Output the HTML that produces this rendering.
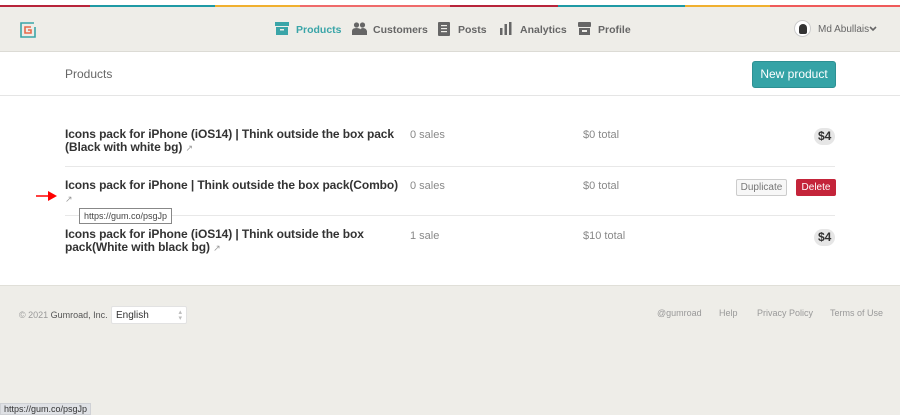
<!DOCTYPE html>
<html><head><style>
*{margin:0;padding:0;box-sizing:border-box}
body{width:900px;height:415px;overflow:hidden;font-family:"Liberation Sans",sans-serif;background:#eeede8;position:relative}
.abs{position:absolute}
.stripe{top:5px;height:2px;left:0;width:900px;background:linear-gradient(90deg,#b8243a 0 90px,#1f9aa5 90px 215px,#f0b030 215px 300px,#ef6a6a 300px 450px,#b8243a 450px 558px,#1f9aa5 558px 685px,#f0b030 685px 770px,#ef5a5a 770px 900px)}
.top{top:0;left:0;width:900px;height:5px;background:#fff}
.hdr{top:7px;left:0;width:900px;height:45px;border-bottom:1px solid #dcdbd5}
.nav{font-size:10.5px;font-weight:bold;color:#666;top:24px}
.main{top:52px;left:0;width:900px;height:233px;background:#fff}
.title{font-size:12px;font-weight:bold;color:#333;line-height:13px;left:65px;width:340px;letter-spacing:-0.1px}
.cell{font-size:11px;color:#888}
.sep{left:65px;width:770px;height:1px;background:#e8e8e8}
.badge{background:#e6e6e6;border-radius:9px;font-size:12px;font-weight:bold;color:#333;padding:2px 4px;line-height:13px}
.ar{color:#999;font-size:9px;font-weight:normal}
</style></head><body>
<div class="abs top"></div>
<div class="abs stripe"></div>
<div class="abs hdr">
 <svg class="abs" style="left:19px;top:14px" width="18" height="18" viewBox="0 0 18 18"><path d="M15 2H2v14h14V6" fill="none" stroke="#3aa5a8" stroke-width="1.6"/><path d="M12 6H6v6h6v-3H9" fill="none" stroke="#e86a4a" stroke-width="1.6"/></svg>
</div>
<svg class="abs" style="left:275px;top:22px" width="14" height="13"><rect x="0" y="0" width="14" height="4" fill="#3aa5a8"/><rect x="1" y="5" width="12" height="8" fill="#3aa5a8"/><rect x="5" y="7" width="4" height="1.5" fill="#eeede8"/></svg>
<div class="abs nav" style="left:296px;color:#3aa5a8">Products</div>
<svg class="abs" style="left:352px;top:22px" width="15" height="13" fill="#666"><circle cx="4.5" cy="3" r="2.6"/><circle cx="10.5" cy="3" r="2.6"/><path d="M0 13v-4q0-3 4.5-3t4.5 3v4zM8 13V9q0-3 3-3t4 3v4z"/></svg>
<div class="abs nav" style="left:373px">Customers</div>
<svg class="abs" style="left:438px;top:22px" width="12" height="14" fill="#666"><rect x="0" y="0" width="12" height="14" rx="1"/><rect x="3" y="3" width="6" height="1.2" fill="#eeede8"/><rect x="3" y="6" width="6" height="1.2" fill="#eeede8"/><rect x="3" y="9" width="6" height="1.2" fill="#eeede8"/></svg>
<div class="abs nav" style="left:458px">Posts</div>
<svg class="abs" style="left:500px;top:22px" width="12" height="13" fill="#666"><rect x="0" y="6" width="2.5" height="7"/><rect x="4.5" y="2" width="2.5" height="11"/><rect x="9" y="0" width="2.5" height="13"/></svg>
<div class="abs nav" style="left:520px">Analytics</div>
<svg class="abs" style="left:578px;top:22px" width="13" height="13" fill="#666"><rect x="0" y="0" width="13" height="5" rx="1"/><rect x="1" y="6" width="11" height="7"/><rect x="4" y="8" width="5" height="2" fill="#eeede8"/></svg>
<div class="abs nav" style="left:598px">Profile</div>
<div class="abs" style="left:794px;top:20px;width:17px;height:17px;border-radius:50%;background:#fff;border:1px solid #ccc"><div style="margin:3px auto;width:8px;height:10px;background:#333;border-radius:4px 4px 2px 2px"></div></div>
<div class="abs nav" style="left:818px;top:24px;font-size:10px;font-weight:normal">Md Abullais</div>
<svg class="abs" style="left:869px;top:26px" width="8" height="6"><path d="M1 1l3 3 3-3" fill="none" stroke="#666" stroke-width="1.6"/></svg>

<div class="abs main"></div>
<div class="abs" style="left:65px;top:67px;font-size:12px;color:#666">Products</div>
<div class="abs" style="left:752px;top:61px;width:84px;height:27px;background:#35a3a6;border:1px solid #2d9093;border-radius:3px;color:#fff;font-size:12px;text-align:center;line-height:25px">New product</div>
<div class="abs" style="left:0;top:95px;width:900px;height:1px;background:#e5e5e5"></div>

<div class="abs title" style="top:128px">Icons pack for iPhone (iOS14) | Think outside the box pack (Black with white bg) <span class="ar">&#8599;</span></div>
<div class="abs cell" style="left:410px;top:129px">0 sales</div>
<div class="abs cell" style="left:583px;top:129px">$0 total</div>
<div class="abs badge" style="left:814px;top:128px">$4</div>
<div class="abs sep" style="top:166px"></div>

<div class="abs title" style="top:179px;width:336px">Icons pack for iPhone | Think outside the box pack(Combo) <span class="ar">&#8599;</span></div>
<div class="abs cell" style="left:410px;top:180px">0 sales</div>
<div class="abs cell" style="left:583px;top:180px">$0 total</div>
<div class="abs" style="left:736px;top:179px;width:51px;height:17px;border:1px solid #ccc;border-radius:2px;background:#f7f7f7;font-size:10px;color:#777;text-align:center;line-height:15px">Duplicate</div>
<div class="abs" style="left:796px;top:179px;width:40px;height:17px;border-radius:2px;background:#c4243a;font-size:10px;color:#fff;text-align:center;line-height:17px">Delete</div>
<svg class="abs" style="left:36px;top:190px" width="24" height="12"><path d="M0 6h14" stroke="#f00" stroke-width="1.5"/><path d="M12 1l9 5-9 5z" fill="#f00"/></svg>
<div class="abs sep" style="top:215px"></div>
<div class="abs" style="left:79px;top:208px;border:1px solid #888;background:#fff;font-size:9px;color:#444;padding:2px 4px">https://gum.co/psgJp</div>

<div class="abs title" style="top:228px;width:320px">Icons pack for iPhone (iOS14) | Think outside the box pack(White with black bg) <span class="ar">&#8599;</span></div>
<div class="abs cell" style="left:410px;top:230px">1 sale</div>
<div class="abs cell" style="left:583px;top:230px">$10 total</div>
<div class="abs badge" style="left:814px;top:229px">$4</div>

<div class="abs" style="left:0;top:285px;width:900px;height:1px;background:#e0dfd8"></div>
<div class="abs" style="left:19px;top:310px;font-size:9px;color:#999">© 2021 <span style="color:#555">Gumroad, Inc.</span></div>
<div class="abs" style="left:111px;top:306px;width:76px;height:18px;background:#fff;border:1px solid #e2e2e2;border-radius:2px;font-size:10px;color:#333;padding:3px 4px">English<span style="float:right;color:#bbb;font-size:7px;line-height:6px">▴<br>▾</span></div>
<div class="abs" style="left:657px;top:308px;font-size:9px;color:#999">@gumroad</div>
<div class="abs" style="left:719px;top:308px;font-size:9px;color:#999">Help</div>
<div class="abs" style="left:757px;top:308px;font-size:9px;color:#999">Privacy Policy</div>
<div class="abs" style="left:830px;top:308px;font-size:9px;color:#999">Terms of Use</div>
<div class="abs" style="left:0;top:403px;height:12px;background:#dfe1e5;border:1px solid #cfd1d5;font-size:9px;color:#333;padding:0 3px;line-height:11px">https://gum.co/psgJp</div>
</body></html>
